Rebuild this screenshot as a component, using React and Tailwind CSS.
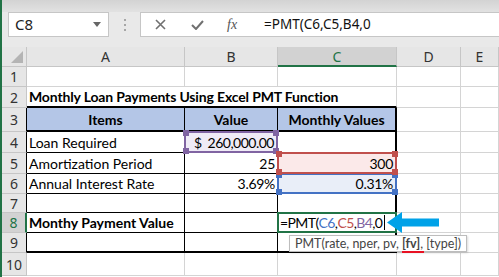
import React from "react";

const grid = "shrink-0 h-full flex items-center whitespace-nowrap border-r border-b border-[#d4d4d4]";
const head = "shrink-0 h-full flex items-center justify-center border-r border-b border-[#c6c6c6] bg-[#e6e6e6] text-[#333] font-['Noto_Sans',sans-serif]";

function RowHead({ n, sel, dark }) {
  return (
    <div
      className={
        sel
          ? "w-[25px] shrink-0 h-full flex items-center justify-center border-b border-[#c6c6c6] border-r-2 border-r-[#217346] bg-[#d2d2d2] text-[#217346] text-[14px] font-['Noto_Sans',sans-serif]"
          : dark
          ? "w-[25px] shrink-0 h-full flex items-center justify-center border-b border-[#c6c6c6] border-r border-r-black bg-[#e6e6e6] text-[#333] text-[14px] font-['Noto_Sans',sans-serif]"
          : "w-[25px] shrink-0 h-full flex items-center justify-center border-b border-r border-[#c6c6c6] bg-[#e6e6e6] text-[#333] text-[14px] font-['Noto_Sans',sans-serif]"
      }
    >
      {n}
    </div>
  );
}

function Handles({ color }) {
  return (
    <>
      <span className={"absolute -left-[3px] -top-[3px] w-[6px] h-[6px] " + color} />
      <span className={"absolute -right-[3px] -top-[3px] w-[6px] h-[6px] " + color} />
      <span className={"absolute -left-[3px] -bottom-[3px] w-[6px] h-[6px] " + color} />
      <span className={"absolute -right-[3px] -bottom-[3px] w-[6px] h-[6px] " + color} />
    </>
  );
}

function FormulaBar() {
  return (
    <div className="h-[47px] bg-[#e9e9e9] relative">
      <div className="h-[12px] bg-gradient-to-b from-[#d3d3d3] to-[#e2e2e2]" />
      <div className="flex items-center h-[25px]">
        <div className="ml-[6px] w-[101px] h-full bg-white border border-[#c6c6c6] flex items-center justify-between pl-[6px] pr-[7px]">
          <span className="text-[15px] text-[#222] font-['Noto_Sans',sans-serif]">C8</span>
          <svg width="8" height="5" viewBox="0 0 8 5">
            <path d="M0 0h8L4 5z" fill="#666" />
          </svg>
        </div>
        <div className="w-[31px] flex flex-col items-center gap-[3px]">
          <span className="w-[2px] h-[2px] bg-[#a6a6a6]" />
          <span className="w-[2px] h-[2px] bg-[#a6a6a6]" />
          <span className="w-[2px] h-[2px] bg-[#a6a6a6]" />
        </div>
        <div className="flex-1 h-full bg-white border border-r-0 border-[#c6c6c6] flex items-center">
          <svg className="ml-[14px]" width="11" height="11" viewBox="0 0 11 11">
            <path d="M1 1l9 9M10 1l-9 9" stroke="#707070" strokeWidth="1.6" />
          </svg>
          <svg className="ml-[25px]" width="13" height="10" viewBox="0 0 13 10">
            <path d="M1 5l4 4 7-8" stroke="#707070" strokeWidth="2" fill="none" />
          </svg>
          <span className="ml-[23px] text-[14px] italic text-[#555] font-['Liberation_Serif',serif]">fx</span>
          <span className="ml-[27px] text-[13.5px] text-[#111] font-['Noto_Sans',sans-serif]">=PMT(C6,C5,B4,0</span>
        </div>
      </div>
    </div>
  );
}

export default function App() {
  return (
    <div className="w-[499px] h-[277px] overflow-hidden bg-white border-l-2 border-[#217346] font-['Lato',sans-serif] text-[14px] text-black">
      <FormulaBar />
      {/* column headers */}
      <div className="flex h-[20px]">
        <div className={head + " w-[25px] relative"}>
          <svg className="absolute right-[3px] bottom-[3px]" width="12" height="12" viewBox="0 0 12 12">
            <path d="M12 0v12H0z" fill="#b4b4b4" />
          </svg>
        </div>
        <div className={head + " w-[158px] text-[14px]"}>A</div>
        <div className={head + " w-[93px] text-[14px]"}>B</div>
        <div className="w-[119px] shrink-0 h-full flex items-center justify-center border-r border-[#c6c6c6] border-b-2 border-b-[#217346] bg-[#d2d2d2] text-[#217346] text-[14px] font-['Noto_Sans',sans-serif]">C</div>
        <div className={head + " w-[64px] text-[14px]"}>D</div>
        <div className={head + " flex-1 text-[14px]"}>E</div>
      </div>

      {/* row 1 */}
      <div className="flex h-[20px]">
        <RowHead n="1" />
        <div className={grid + " w-[158px]"} />
        <div className={grid + " w-[93px]"} />
        <div className={grid + " w-[119px]"} />
        <div className={grid + " w-[64px]"} />
        <div className={grid + " flex-1"} />
      </div>

      {/* row 2 */}
      <div className="flex h-[21px]">
        <RowHead n="2" />
        <div className="w-[158px] shrink-0 h-full flex items-center whitespace-nowrap border-b-2 border-black pl-[2px] font-bold tracking-[-0.15px]">
          Monthly Loan Payments Using Excel PMT Function
        </div>
        <div className="w-[93px] shrink-0 h-full border-b-2 border-black" />
        <div className="w-[119px] shrink-0 h-full border-b-2 border-b-black border-r border-r-[#d4d4d4]" />
        <div className={grid + " w-[64px]"} />
        <div className={grid + " flex-1"} />
      </div>

      {/* row 3 */}
      <div className="flex h-[24px]">
        <RowHead n="3" dark />
        <div className="w-[158px] shrink-0 h-full flex items-center justify-center bg-[#b4c6e7] border-r border-b-2 border-black font-bold">Items</div>
        <div className="w-[93px] shrink-0 h-full flex items-center justify-center bg-[#b4c6e7] border-r border-b-2 border-black font-bold">Value</div>
        <div className="w-[119px] shrink-0 h-full flex items-center justify-center bg-[#b4c6e7] border-r-2 border-b-2 border-black font-bold">Monthly Values</div>
        <div className={grid + " w-[64px]"} />
        <div className={grid + " flex-1"} />
      </div>

      {/* row 4 */}
      <div className="flex h-[21px]">
        <RowHead n="4" dark />
        <div className="w-[158px] shrink-0 h-full flex items-center border-r border-b border-black pl-[2px]">Loan Required</div>
        <div className="w-[93px] shrink-0 h-full flex items-center border-r border-b border-black relative">
          <div className="absolute -left-[1px] -top-[1px] -right-[1px] -bottom-[1px] border-2 border-[#8064a2] bg-[#efebf6] flex items-center justify-between pl-[8px] pr-[2px] tracking-[-0.5px]">
            <span>$</span>
            <span>260,000.00</span>
            <Handles color="bg-[#8064a2]" />
          </div>
        </div>
        <div className="w-[119px] shrink-0 h-full border-r-2 border-b border-black" />
        <div className={grid + " w-[64px]"} />
        <div className={grid + " flex-1"} />
      </div>

      {/* row 5 */}
      <div className="flex h-[21px]">
        <RowHead n="5" dark />
        <div className="w-[158px] shrink-0 h-full flex items-center border-r border-b border-black pl-[2px]">Amortization Period</div>
        <div className="w-[93px] shrink-0 h-full flex items-center justify-end border-r border-b border-black pr-[2px] tracking-[-0.3px]">25</div>
        <div className="w-[119px] shrink-0 h-full border-r-2 border-b border-black relative">
          <div className="absolute -left-[1px] -top-[1px] -right-[2px] -bottom-[1px] border-2 border-[#c0504d] bg-[#fbe9e9] flex items-center justify-end pr-[2px] z-10 tracking-[-0.3px]">
            <span>300</span>
            <Handles color="bg-[#c0504d]" />
          </div>
        </div>
        <div className={grid + " w-[64px]"} />
        <div className={grid + " flex-1"} />
      </div>

      {/* row 6 */}
      <div className="flex h-[20px]">
        <RowHead n="6" dark />
        <div className="w-[158px] shrink-0 h-full flex items-center border-r border-b border-black pl-[2px]">Annual Interest Rate</div>
        <div className="w-[93px] shrink-0 h-full flex items-center justify-end border-r border-b border-black pr-[2px] tracking-[-0.3px]">3.69%</div>
        <div className="w-[119px] shrink-0 h-full border-r-2 border-b border-black relative">
          <div className="absolute -left-[1px] -top-[1px] -right-[2px] -bottom-[1px] border-2 border-[#4472c4] bg-[#e9eef8] flex items-center justify-end pr-[2px] tracking-[-0.3px]">
            <span>0.31%</span>
            <Handles color="bg-[#4472c4]" />
          </div>
        </div>
        <div className={grid + " w-[64px]"} />
        <div className={grid + " flex-1"} />
      </div>

      {/* row 7 */}
      <div className="flex h-[19px]">
        <RowHead n="7" dark />
        <div className="w-[158px] shrink-0 h-full border-r border-b border-black" />
        <div className="w-[93px] shrink-0 h-full border-r border-b border-black" />
        <div className="w-[119px] shrink-0 h-full border-r-2 border-b border-black" />
        <div className={grid + " w-[64px]"} />
        <div className={grid + " flex-1"} />
      </div>

      {/* row 8 */}
      <div className="flex h-[20px] relative z-20">
        <RowHead n="8" sel />
        <div className="w-[158px] shrink-0 h-full flex items-center border-r border-b border-black pl-[2px] font-bold">Monthy Payment Value</div>
        <div className="w-[93px] shrink-0 h-full border-r border-b border-black" />
        <div className="w-[119px] shrink-0 h-full border-r-2 border-b border-black relative">
          <div className="absolute -left-[1px] -top-[1px] -right-[2px] -bottom-[1px] border-2 border-[#217346] bg-white flex items-center pl-[1px] tracking-[-0.6px]">
            <span>=PMT(</span>
            <span className="text-[#4472c4]">C6</span>
            <span>,</span>
            <span className="text-[#c0504d]">C5</span>
            <span>,</span>
            <span className="text-[#8064a2]">B4</span>
            <span>,0</span>
            <span className="ml-[2px] w-[1px] h-[15px] bg-black" />
          </div>
          {/* arrow */}
          <svg className="absolute left-[109px] top-[-1px]" width="52" height="21" viewBox="0 0 52 21">
            <path d="M0 10.5L15 0v6.5h37v8H15V21z" fill="#00a2e8" />
          </svg>
          {/* tooltip */}
          <div className="absolute left-[11px] top-[22px] h-[17px] bg-white border border-[#bdbdbd] shadow-[1px_1px_2px_rgba(0,0,0,0.15)] px-[5px] text-[12.5px] leading-[15px] text-[#444] whitespace-nowrap">
            PMT(rate, nper, pv,{" "}
            <span className="relative font-bold">
              [fv]
              <span className="absolute left-0 -right-[4px] -bottom-[2px] h-[2px] bg-[#e81123]" />
            </span>
            , [type])
          </div>
        </div>
        <div className={grid + " w-[64px]"} />
        <div className={grid + " flex-1"} />
      </div>

      {/* row 9 */}
      <div className="flex h-[20px]">
        <RowHead n="9" dark />
        <div className="w-[158px] shrink-0 h-full border-r border-b-2 border-black" />
        <div className="w-[93px] shrink-0 h-full border-r border-b-2 border-black" />
        <div className="w-[119px] shrink-0 h-full border-r-2 border-b-2 border-black" />
        <div className={grid + " w-[64px]"} />
        <div className={grid + " flex-1"} />
      </div>

      {/* row 10 */}
      <div className="flex h-[23px]">
        <RowHead n="10" />
        <div className={grid + " w-[158px]"} />
        <div className={grid + " w-[93px]"} />
        <div className={grid + " w-[119px]"} />
        <div className={grid + " w-[64px]"} />
        <div className={grid + " flex-1"} />
      </div>
    </div>
  );
}
